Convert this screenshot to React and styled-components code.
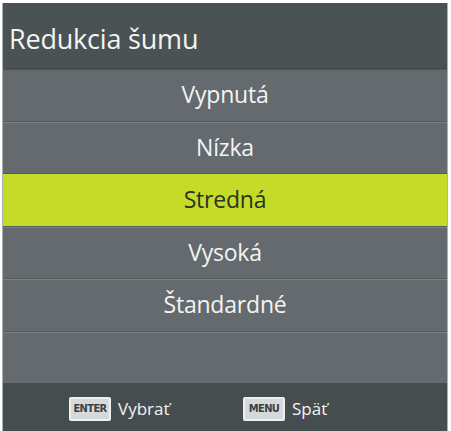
import React from "react";
import styled, { createGlobalStyle } from "styled-components";

const GlobalStyle = createGlobalStyle`
  html, body {
    margin: 0;
    padding: 0;
    background: #ffffff;
  }
  body {
    font-family: "Open Sans", "Noto Sans", sans-serif;
  }
`;

const Panel = styled.div`
  width: 446px;
  height: 428px;
  margin: 3px 0 0 2px;
  display: flex;
  flex-direction: column;
  background: #646a6d;
  border-left: 1px solid #a9b0b1;
  border-right: 1px solid #a9b0b1;
  box-sizing: border-box;
  overflow: hidden;
`;

const Header = styled.div`
  height: 65px;
  flex: none;
  display: flex;
  align-items: center;
  padding: 5px 0 0 6px;
  box-sizing: border-box;
  background: #4b5254;
  color: #f2f4f4;
  font-size: 27px;
  letter-spacing: -0.2px;
  box-shadow: 0 1px 2px rgba(30, 35, 36, 0.7);
  position: relative;
  z-index: 1;
`;

const List = styled.div`
  display: flex;
  flex-direction: column;
`;

const Row = styled.div`
  height: 52.5px;
  flex: none;
  display: flex;
  align-items: center;
  justify-content: center;
  box-sizing: border-box;
  border-top: 1px solid ${(p) => (p.$first ? "transparent" : "#555b5d")};
  box-shadow: inset 0 1px 0 ${(p) => (p.$first || p.$active ? "transparent" : "#7b8285")};
  background: ${(p) => (p.$active ? "#c4dc28" : "#646a6d")};
  color: ${(p) => (p.$active ? "#2c3124" : "#f3f4f4")};
  font-size: 23px;
  letter-spacing: -0.2px;
  padding-bottom: 1px;
`;

const Footer = styled.div`
  flex: 1;
  display: flex;
  align-items: center;
  padding: 3px 0 0 66px;
  background: #464d4f;
  color: #f2f4f4;
  font-size: 17px;
`;

const Hint = styled.div`
  display: flex;
  align-items: center;
  gap: 7px;
  width: ${(p) => p.$width}px;
`;

const Key = styled.span`
  display: inline-flex;
  align-items: center;
  justify-content: center;
  width: 42px;
  height: 24px;
  border-radius: 2px;
  background: #d5d9d9;
  border: 2px solid #eef0f0;
  box-sizing: border-box;
  color: #3b4043;
  font-family: "Liberation Sans Narrow", "DejaVu Sans Condensed", sans-serif;
  font-size: 11px;
  font-weight: bold;
  letter-spacing: -0.6px;
`;

const items = ["Vypnutá", "Nízka", "Stredná", "Vysoká", "Štandardné", ""];

const App = () => {
  return (
    <>
      <GlobalStyle />
      <Panel>
        <Header>Redukcia šumu</Header>
        <List>
          {items.map((label, i) => (
            <Row key={i} $first={i === 0} $active={i === 2}>
              {label}
            </Row>
          ))}
        </List>
        <Footer>
          <Hint $width={174}>
            <Key>ENTER</Key>
            Vybrať
          </Hint>
          <Hint $width={120}>
            <Key>MENU</Key>
            Späť
          </Hint>
        </Footer>
      </Panel>
    </>
  );
};

export default App;
